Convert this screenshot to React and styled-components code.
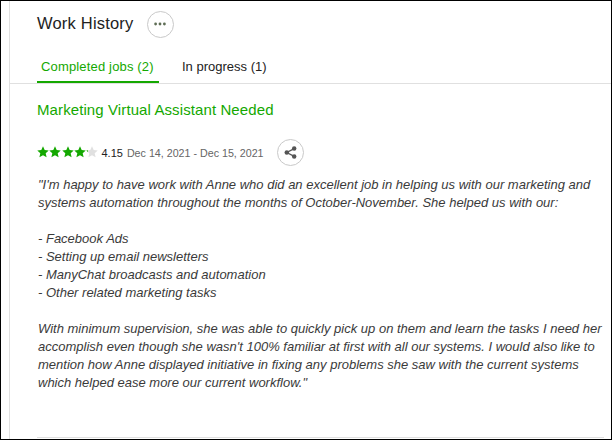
import React from "react";
import styled, { createGlobalStyle } from "styled-components";

const Global = createGlobalStyle`
  html, body { margin: 0; padding: 0; background: #fff; }
  body { font-family: "Liberation Sans", Arial, sans-serif; }
`;
const Frame = styled.div`
  width: 612px; height: 440px; box-sizing: border-box; overflow: hidden;
  border: 1px solid #000; background: #fff; display: flex; padding-left: 8px;
`;
const Card = styled.section`
  flex: 1; border-left: 1px solid #e0e0e0; display: flex; flex-direction: column; min-width: 0;
`;
const Header = styled.header`
  height: 46px; padding-left: 27px; display: flex; align-items: center; gap: 13px;
`;
const Title = styled.h2`
  margin: 0; font-size: 16.5px; font-weight: 400; color: #222; letter-spacing: .2px; position: relative; top: -1px;
`;
const RoundButton = styled.button`
  width: 27px; height: 27px; padding: 0; border: 1px solid #c9c9c9; border-radius: 50%; background: #fff;
  display: flex; align-items: center; justify-content: center; flex: none;
`;
const Tabs = styled.nav`
  height: 37px; box-sizing: border-box; border-bottom: 1px solid #e0e0e0; padding-left: 27px; display: flex; gap: 19px;
`;
const Tab = styled.div`
  height: 36px; box-sizing: border-box; padding: 12px 4px 0; font-size: 13px; line-height: 16px;
  white-space: nowrap;
  letter-spacing: ${p => (p.$active ? ".16px" : "0")};
  color: ${p => (p.$active ? "#14a800" : "#222")};
  width: ${p => (p.$active ? "122px" : "auto")};
  border-bottom: ${p => (p.$active ? "2px solid #14a800" : "none")};
`;
const Body = styled.div`
  flex: 1; margin: 0 7px 1px 27px; border-bottom: 1px solid #e0e0e0; display: flex; flex-direction: column;
`;
const JobTitle = styled.h3`
  margin: 17px 0 0; font-size: 15px; line-height: 18px; font-weight: 400; color: #14a800; letter-spacing: .1px;
`;
const Meta = styled.div`
  margin-top: 20px; height: 27px; display: flex; align-items: center;
`;
const Stars = styled.span`
  display: inline-flex; margin-right: 3px; position: relative; top: -1px;
`;
const Score = styled.span`
  color: #222; margin-right: 4px; font-size: 11px;
`;
const Dates = styled.span`
  color: #656565; margin-right: 13px; font-size: 10.7px;
`;
const Feedback = styled.p`
  margin: 10px 0 0 1px; font-size: 13px; line-height: 18px; font-style: italic; color: #3a3a3a; white-space: pre;
`;

const STAR = "M6 .3l1.7 3.7 4 .5-3 2.7.9 4L6 9.2l-3.6 2 .9-4-3-2.7 4-.5z";
const Star = ({ fill = 1 }) => {
  const id = `s${String(fill).replace(".", "")}`;
  return (
    <svg width="12" height="12" viewBox="0 0 12 12" style={{ marginRight: 0.3 }}>
      <defs>
        <linearGradient id={id}>
          <stop offset={fill} stopColor="#14a800" />
          <stop offset={fill} stopColor="#e0e0e0" />
        </linearGradient>
      </defs>
      <path d={STAR} fill={`url(#${id})`} />
    </svg>
  );
};

const text = `"I'm happy to have work with Anne who did an excellent job in helping us with our marketing and
systems automation throughout the months of October-November. She helped us with our:

- Facebook Ads
- Setting up email newsletters
- ManyChat broadcasts and automation
- Other related marketing tasks

With minimum supervision, she was able to quickly pick up on them and learn the tasks I need her
accomplish even though she wasn't 100% familiar at first with all our systems. I would also like to
mention how Anne displayed initiative in fixing any problems she saw with the current systems
which helped ease more our current workflow."`;

export default function App() {
  return (
    <Frame>
      <Global />
      <Card>
        <Header>
          <Title>Work History</Title>
          <RoundButton aria-label="More">
            <svg width="12" height="4" viewBox="0 0 12 4"><g fill="#5e6d55"><circle cx="1.6" cy="2" r="1.4" /><circle cx="6" cy="2" r="1.4" /><circle cx="10.4" cy="2" r="1.4" /></g></svg>
          </RoundButton>
        </Header>
        <Tabs>
          <Tab $active>Completed jobs (2)</Tab>
          <Tab>In progress (1)</Tab>
        </Tabs>
        <Body>
          <JobTitle>Marketing Virtual Assistant Needed</JobTitle>
          <Meta>
            <Stars><Star /><Star /><Star /><Star /><Star fill={0.15} /></Stars>
            <Score>4.15</Score>
            <Dates>Dec 14, 2021 - Dec 15, 2021</Dates>
            <RoundButton aria-label="Share">
              <svg width="13" height="13" viewBox="0 0 14 14"><g fill="#555"><circle cx="11" cy="2.8" r="2.4" /><circle cx="11" cy="11.2" r="2.4" /><circle cx="3" cy="7" r="2.4" /></g><path d="M11 2.8L3 7l8 4.2" fill="none" stroke="#555" strokeWidth="1.4" /></svg>
            </RoundButton>
          </Meta>
          <Feedback>{text}</Feedback>
        </Body>
      </Card>
    </Frame>
  );
}
